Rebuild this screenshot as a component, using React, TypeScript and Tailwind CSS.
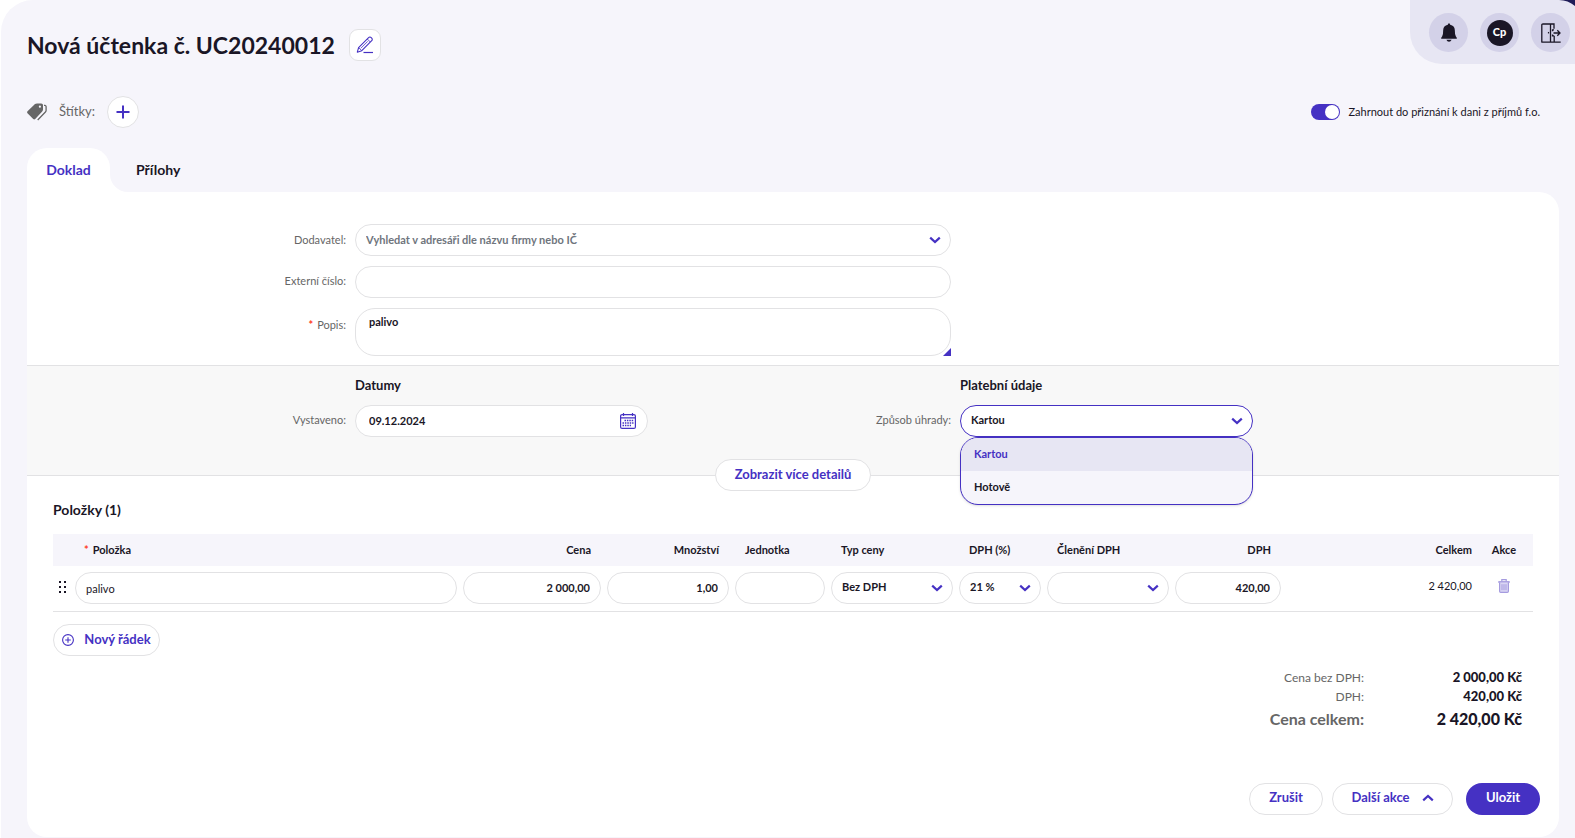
import { useState, type ReactNode } from 'react';

const inputBase =
  'block h-8 w-full rounded-full border border-[#e2e2e4] bg-white pb-0.5 text-[11px] font-bold text-[#1a1626] outline-none';
const outlineButton =
  'flex h-8 items-center justify-center rounded-full border border-[#e2e2e4] bg-white text-[13px] font-bold text-[#4531c3]';
const fieldLabel = 'pr-[9px] text-right text-[11px] text-[#666]';

function Chevron({ up = false, className = '' }: { up?: boolean; className?: string }) {
  return (
    <svg viewBox="0 0 12 8" className={`h-2 w-3 ${className}`} fill="none" stroke="#4531c3" strokeWidth="2.2" aria-hidden="true">
      <path d={up ? 'M1.2 6.4 6 2l4.8 4.4' : 'M1.2 1.6 6 6l4.8-4.4'} />
    </svg>
  );
}

function PencilIcon() {
  return (
    <svg viewBox="0 0 18 18" className="h-[18px] w-[18px]" fill="none" stroke="#4531c3" strokeLinejoin="round" aria-hidden="true">
      <path d="M1.3 16.2 2.6 11.6 12.6 1.6a1.8 1.8 0 0 1 2.6 0l.5.5a1.8 1.800 0 0 1 0 2.600L5.800 14.700Z" strokeWidth="1.100" />
      <path d="m2.600 11.600 3.200 3.100M11.300 3l3 3M4.800 12.300 11.800 5.300" strokeWidth=".8" />
      <path d="M7.500 16.500H17" strokeWidth="1.200" />
    </svg>
  );
}

function TagsIcon() {
  return (
    <svg viewBox="0 0 20 18" className="h-[18px] w-5" aria-hidden="true">
      <path
        fillRule="evenodd"
        fill="#666"
        d="M.5 8.300 8 1.100Q8.900.4 10 .4h4.300q1.700 0 1.700 1.700v4.500q0 1-.8 1.800l-7 7.600q-1 .9-2 0L.5 10.300q-.8-1 0-2ZM12.900 2.600a1.100 1.100 0 1 0 0 2.200 1.100 1.100 0 0 0 0-2.200Z"
      />
      <path d="M17 2.300h1q1.100.2 1.100 1.300v3.800q0 .9-.7 1.600l-7.700 8" fill="none" stroke="#666" strokeWidth="1.300" />
      <path d="M17.200 3v4.100q0 .9-.6 1.500L9.200 16.600" fill="none" stroke="#f6f5fb" strokeWidth=".7" />
    </svg>
  );
}

function BellIcon() {
  return (
    <svg viewBox="0 0 16 19" className="h-[19px] w-4" fill="#1a1626" aria-hidden="true">
      <path d="M8 .2q1 0 1.200 1.500 4.400.9 4.600 5.300 0 4.500 1 6.200.7 1 1 1.600.3 1-.7 1H.900q-1-.1-.7-1 .3-.6 1-1.600 1-1.700 1-6.200.2-4.400 4.600-5.300Q7 .2 8 .2Z" />
      <path d="M5.400 16.800h5.200Q9.800 18.800 8 18.800t-2.600-2Z" />
    </svg>
  );
}

function ExitIcon() {
  return (
    <svg viewBox="0 0 20 20" className="h-5 w-5" fill="none" stroke="#1a1626" strokeWidth="1.300" aria-hidden="true">
      <path d="M.8 19V2.200Q.8 1 2 1h11v4.800M13.200 12.800V19M9.500 1v18M.3 19.200h19.400" />
      <path d="M6.900 9.700h1.200" strokeWidth="1.500" />
      <path d="M11.500 8.200V6.800h1.500M11.500 11.400v1.500h1.500M12.500 10H19M16.300 7.200 19 10l-2.700 2.800" />
    </svg>
  );
}

function CalendarIcon() {
  return (
    <svg viewBox="0 0 16 16" className="h-4 w-4" fill="none" stroke="#4531c3" aria-hidden="true">
      <rect x=".6" y="1.600" width="14.800" height="13.800" rx="1.500" strokeWidth="1.200" />
      <path d="M.6 4.900h14.800M3.500 0v3M12.500 0v3" strokeWidth="1.200" />
      <path d="M4.500 7.500h9M2.500 10h11M2.500 12.500h8.500" strokeWidth="1.400" strokeDasharray="1.500 .9" />
    </svg>
  );
}

function TrashIcon() {
  return (
    <svg viewBox="0 0 12 14" className="h-3.5 w-3" fill="none" stroke="#a59bdf" aria-hidden="true">
      <path d="M.3 3h11.400" strokeWidth="1.800" />
      <path d="M3.800 2.400V.7h4.400v1.700" strokeWidth="1.200" />
      <path d="M1.600 3.500v8.700q0 1.100 1.100 1.100h6.600q1.100 0 1.100-1.100V3.500" fill="#dad6f3" strokeWidth="1.200" />
      <path d="M4 5.200v6M6 5.200v6M8 5.200v6" strokeWidth="1" />
    </svg>
  );
}

function PlusCircleIcon() {
  return (
    <svg viewBox="0 0 12 12" className="h-3 w-3" fill="none" stroke="#4531c3" strokeWidth="1.100" aria-hidden="true">
      <circle cx="6" cy="6" r="5.400" />
      <path d="M6 3.200v5.600M3.200 6h5.600" />
    </svg>
  );
}

function SelectBox({ label, options }: { label: string; options: string[] }) {
  return (
    <div className="grid items-center">
      <select aria-label={label} className={`${inputBase} col-start-1 row-start-1 appearance-none px-2.5`}>
        {options.map((option) => (
          <option key={option}>{option}</option>
        ))}
      </select>
      <Chevron className="pointer-events-none col-start-1 row-start-1 mr-2.5 justify-self-end" />
    </div>
  );
}

function RoundButton({ label, children }: { label: string; children: ReactNode }) {
  return (
    <button type="button" aria-label={label} className="flex size-[39px] items-center justify-center rounded-full bg-[#d3d1e8]">
      {children}
    </button>
  );
}

function PaymentSelect() {
  const methods = ['Kartou', 'Hotově'];
  const [method, setMethod] = useState('Kartou');
  const [open, setOpen] = useState(true);
  return (
    <div className="relative">
      <div className="grid items-center">
        <select
          id="payment"
          value={method}
          onChange={(event) => setMethod(event.target.value)}
          onMouseDown={(event) => {
            event.preventDefault();
            setOpen(!open);
          }}
          className="col-start-1 row-start-1 block h-8 w-full appearance-none rounded-full border border-[#4531c3] bg-white px-2.5 pb-0.5 text-[11px] font-bold text-[#1a1626] outline-none"
        >
          {methods.map((item) => (
            <option key={item}>{item}</option>
          ))}
        </select>
        <Chevron className="pointer-events-none col-start-1 row-start-1 mr-2.5 justify-self-end" />
      </div>
      {open && (
        <ul role="listbox" aria-label="Způsob úhrady" className="absolute inset-x-0 top-full z-10 overflow-hidden rounded-[18px] border border-[#4531c3] bg-[#f6f5fb] shadow-sm">
          {methods.map((item) => (
            <li
              key={item}
              role="option"
              aria-selected={item === method}
              onClick={() => {
                setMethod(item);
                setOpen(false);
              }}
              className={`h-[33px] px-[13px] text-[11px] leading-[31px] font-bold ${item === method ? 'bg-[#e7e6f3] text-[#4531c3]' : 'text-[#1a1626]'}`}
            >
              {item}
            </li>
          ))}
        </ul>
      )}
    </div>
  );
}

function Header() {
  return (
    <header className="flex items-start justify-between">
      <div className="flex items-center gap-3.5 pt-[29px] pl-[26px]">
        <h1 className="text-[23px] leading-[30px] font-bold">Nová účtenka č. UC20240012</h1>
        <button type="button" aria-label="Upravit číslo" className="flex size-8 items-center justify-center rounded-[9px] border border-[#e2e2e4] bg-white">
          <PencilIcon />
        </button>
      </div>
      <div className="flex h-16 gap-3 rounded-bl-[32px] bg-[#e7e6f3] pt-[13px] pr-[5px] pl-[19px]">
        <RoundButton label="Oznámení">
          <BellIcon />
        </RoundButton>
        <RoundButton label="Uživatel">
          <span className="flex size-[26px] items-center justify-center rounded-full bg-[#1a1626] text-[11px] font-black text-white">Cp</span>
        </RoundButton>
        <RoundButton label="Odhlásit">
          <ExitIcon />
        </RoundButton>
      </div>
    </header>
  );
}

function Toolbar() {
  return (
    <div className="mt-8 flex h-8 items-center justify-between pr-[35px] pl-[26px]">
      <div className="flex items-center">
        <TagsIcon />
        <span className="ml-3 text-[13px] text-[#666]">Štítky:</span>
        <button type="button" aria-label="Přidat štítek" className="ml-3 flex size-8 items-center justify-center rounded-full border border-[#e2e2e4] bg-white">
          <svg viewBox="0 0 14 14" className="size-3.5" stroke="#4531c3" strokeWidth="2" aria-hidden="true">
            <path d="M7 .5v13M.5 7h13" />
          </svg>
        </button>
      </div>
      <label className="flex items-center gap-2 text-[11px]">
        <input type="checkbox" role="switch" defaultChecked className="peer sr-only" />
        <span className="flex h-4 w-[29px] items-center justify-start rounded-full bg-[#b9b7c9] p-px peer-checked:justify-end peer-checked:bg-[#4531c3]">
          <span className="size-3.5 rounded-full bg-white" />
        </span>
        Zahrnout do přiznání k dani z příjmů f.o.
      </label>
    </div>
  );
}

function Tabs() {
  return (
    <div role="tablist" className="mt-5 ml-[26px] flex h-11 text-sm font-bold">
      <button role="tab" type="button" aria-selected="true" className="w-[83px] rounded-t-[20px] bg-white text-[#4531c3]">
        Doklad
      </button>
      <svg viewBox="0 0 18 18" className="size-[18px] self-end" fill="#fff" aria-hidden="true">
        <path d="M0 0v18h18A18 18 0 0 1 0 0Z" />
      </svg>
      <button role="tab" type="button" aria-selected="false" className="ml-2">
        Přílohy
      </button>
    </div>
  );
}

function DocumentForm() {
  return (
    <>
      <div className="grid grid-cols-[328fr_596fr_608fr] gap-y-2.5 pt-8 pb-[9px]">
        <label htmlFor="supplier" className={`${fieldLabel} leading-8`}>
          Dodavatel:
        </label>
        <div className="grid items-center">
          <input
            id="supplier"
            placeholder="Vyhledat v adresáři dle názvu firmy nebo IČ"
            className={`${inputBase} col-start-1 row-start-1 px-2.5 placeholder:text-[#6f757d]`}
          />
          <Chevron className="pointer-events-none col-start-1 row-start-1 mr-2.5 justify-self-end" />
        </div>
        <label htmlFor="external" className={`${fieldLabel} col-start-1 leading-[30px]`}>
          Externí číslo:
        </label>
        <input id="external" className={`${inputBase} px-3`} />
        <label htmlFor="description" className={`${fieldLabel} col-start-1 leading-[34px]`}>
          <span className="mr-1 font-bold text-[#ff3b1f]">*</span>Popis:
        </label>
        <div className="relative">
          <textarea
            id="description"
            defaultValue="palivo"
            className="block h-12 w-full resize-none rounded-[20px] border border-[#e2e2e4] px-[13px] py-[5px] text-[11px] leading-4 font-bold outline-none"
          />
          <svg viewBox="0 0 8 8" className="absolute right-0 bottom-0 size-2" fill="#4531c3" aria-hidden="true">
            <path d="M8 0v8H0Z" />
          </svg>
        </div>
      </div>

      <section className="relative border-y border-[#e2e2e4] bg-[#f8f8f8] pt-2.5 pb-[38px]">
        <div className="grid grid-cols-[328fr_293fr_312fr_293fr_306fr] gap-y-[11px]">
          <h2 className="col-start-2 text-[13px] leading-[18px] font-bold">Datumy</h2>
          <h2 className="col-start-4 text-[13px] leading-[18px] font-bold">Platební údaje</h2>
          <label htmlFor="issued" className={`${fieldLabel} col-start-1 leading-[30px]`}>
            Vystaveno:
          </label>
          <div className="grid items-center">
            <input id="issued" defaultValue="09.12.2024" className={`${inputBase} col-start-1 row-start-1 px-[13px]`} />
            <button type="button" aria-label="Otevřít kalendář" className="col-start-1 row-start-1 mr-3 justify-self-end">
              <CalendarIcon />
            </button>
          </div>
          <label htmlFor="payment" className={`${fieldLabel} leading-[30px]`}>
            Způsob úhrady:
          </label>
          <PaymentSelect />
        </div>
        <div className="absolute inset-x-0 -bottom-4 flex justify-center">
          <button type="button" className={`${outlineButton} w-[156px]`}>
            Zobrazit více detailů
          </button>
        </div>
      </section>
    </>
  );
}

function Items() {
  const cell = 'px-[3px] pt-1.5 pb-[7px]';
  return (
    <section className="px-[26px] pt-6">
      <h2 className="text-sm leading-5 font-bold">Položky (1)</h2>
      <table className="mt-3.5 w-full table-fixed border-collapse text-[11px]">
        <colgroup>
          <col className="w-[19px]" />
          <col />
          <col className="w-36" />
          <col className="w-32" />
          <col className="w-24" />
          <col className="w-32" />
          <col className="w-[88px]" />
          <col className="w-32" />
          <col className="w-28" />
          <col className="w-[191px]" />
          <col className="w-[58px]" />
        </colgroup>
        <thead>
          <tr className="h-8 bg-[#f6f5fb] text-left font-bold">
            <th aria-label="Pořadí" />
            <th className="px-3">
              <span className="mr-1 text-[#ff3b1f]">*</span>Položka
            </th>
            <th className="px-[13px] text-right">Cena</th>
            <th className="px-[13px] text-right">Množství</th>
            <th className="px-[13px]">Jednotka</th>
            <th className="px-[13px]">Typ ceny</th>
            <th className="px-[13px]">DPH (%)</th>
            <th className="px-[13px]">Členění DPH</th>
            <th className="px-[13px] text-right">DPH</th>
            <th className="px-[3px] text-right">Celkem</th>
            <th className="text-center">Akce</th>
          </tr>
        </thead>
        <tbody>
          <tr className="border-b border-[#e2e2e4]">
            <td>
              <svg viewBox="0 0 8 12" className="mb-1 ml-1.5 h-3 w-2" fill="#1a1626" aria-hidden="true">
                <path d="M0 0h2v2H0zM5 0h2v2H5zM0 5h2v2H0zM5 5h2v2H5zM0 10h2v2H0zM5 10h2v2H5z" />
              </svg>
            </td>
            <td className={cell}>
              <input aria-label="Položka" defaultValue="palivo" className="block h-8 w-full rounded-full border border-[#e2e2e4] bg-white px-2.5 text-[11px] outline-none" />
            </td>
            <td className={cell}>
              <input aria-label="Cena" defaultValue="2 000,00" className={`${inputBase} px-2.5 text-right`} />
            </td>
            <td className={cell}>
              <input aria-label="Množství" defaultValue="1,00" className={`${inputBase} px-2.5 text-right`} />
            </td>
            <td className={cell}>
              <input aria-label="Jednotka" className={`${inputBase} px-2.5`} />
            </td>
            <td className={cell}>
              <SelectBox label="Typ ceny" options={['Bez DPH', 'S DPH']} />
            </td>
            <td className={cell}>
              <SelectBox label="DPH (%)" options={['21 %', '12 %', '0 %']} />
            </td>
            <td className={cell}>
              <SelectBox label="Členění DPH" options={['']} />
            </td>
            <td className={cell}>
              <input aria-label="DPH" defaultValue="420,00" className={`${inputBase} px-2.5 text-right`} />
            </td>
            <td className="px-[3px] pb-1 text-right">2 420,00</td>
            <td>
              <button type="button" aria-label="Smazat" className="mx-auto mb-1.5 block">
                <TrashIcon />
              </button>
            </td>
          </tr>
        </tbody>
      </table>
      <button type="button" className={`${outlineButton} mt-3 w-[107px] gap-2.5`}>
        <PlusCircleIcon />
        Nový řádek
      </button>
    </section>
  );
}

function Totals() {
  return (
    <dl className="mt-3 mr-[37px] ml-auto grid w-fit grid-cols-[auto_158px] text-right text-[13px] leading-[19px]">
      <dt className="text-xs leading-[19px] text-[#666]">Cena bez DPH:</dt>
      <dd className="font-black">2 000,00 Kč</dd>
      <dt className="text-xs leading-[19px] text-[#666]">DPH:</dt>
      <dd className="font-black">420,00 Kč</dd>
      <dt className="text-base leading-[25px] font-bold text-[#666]">Cena celkem:</dt>
      <dd className="text-base leading-[25px] font-black">2 420,00 Kč</dd>
    </dl>
  );
}

function Footer() {
  return (
    <footer className="mt-auto flex justify-end pt-10 pr-[19px] pb-[22px]">
      <button type="button" className={`${outlineButton} w-[74px] pb-0.5`}>
        Zrušit
      </button>
      <button type="button" className={`${outlineButton} ml-[9px] w-[121px] gap-3 pb-0.5`}>
        Další akce
        <Chevron up />
      </button>
      <button type="button" className="ml-[13px] h-8 w-[74px] rounded-full bg-[#4531c3] pb-0.5 text-[13px] font-bold text-white">
        Uložit
      </button>
    </footer>
  );
}

export default function App() {
  return (
    <div className="relative min-h-screen bg-white pl-px font-['Lato','Noto_Sans',sans-serif] text-[#1a1626]">
      <div className="flex min-h-screen flex-col rounded-tl-[32px] bg-[#f6f5fb]">
        <Header />
        <Toolbar />
        <Tabs />
        <main className="mr-4 mb-px ml-[26px] flex grow flex-col rounded-tr-[20px] rounded-b-[20px] bg-white">
          <DocumentForm />
          <Items />
          <Totals />
          <Footer />
        </main>
      </div>
      <svg viewBox="0 0 16 6" className="absolute top-0 right-0 h-1.5 w-4" aria-hidden="true">
        <path d="M0 0Q9 0 16 6V0Z" fill="#1f1c58" />
      </svg>
    </div>
  );
}
